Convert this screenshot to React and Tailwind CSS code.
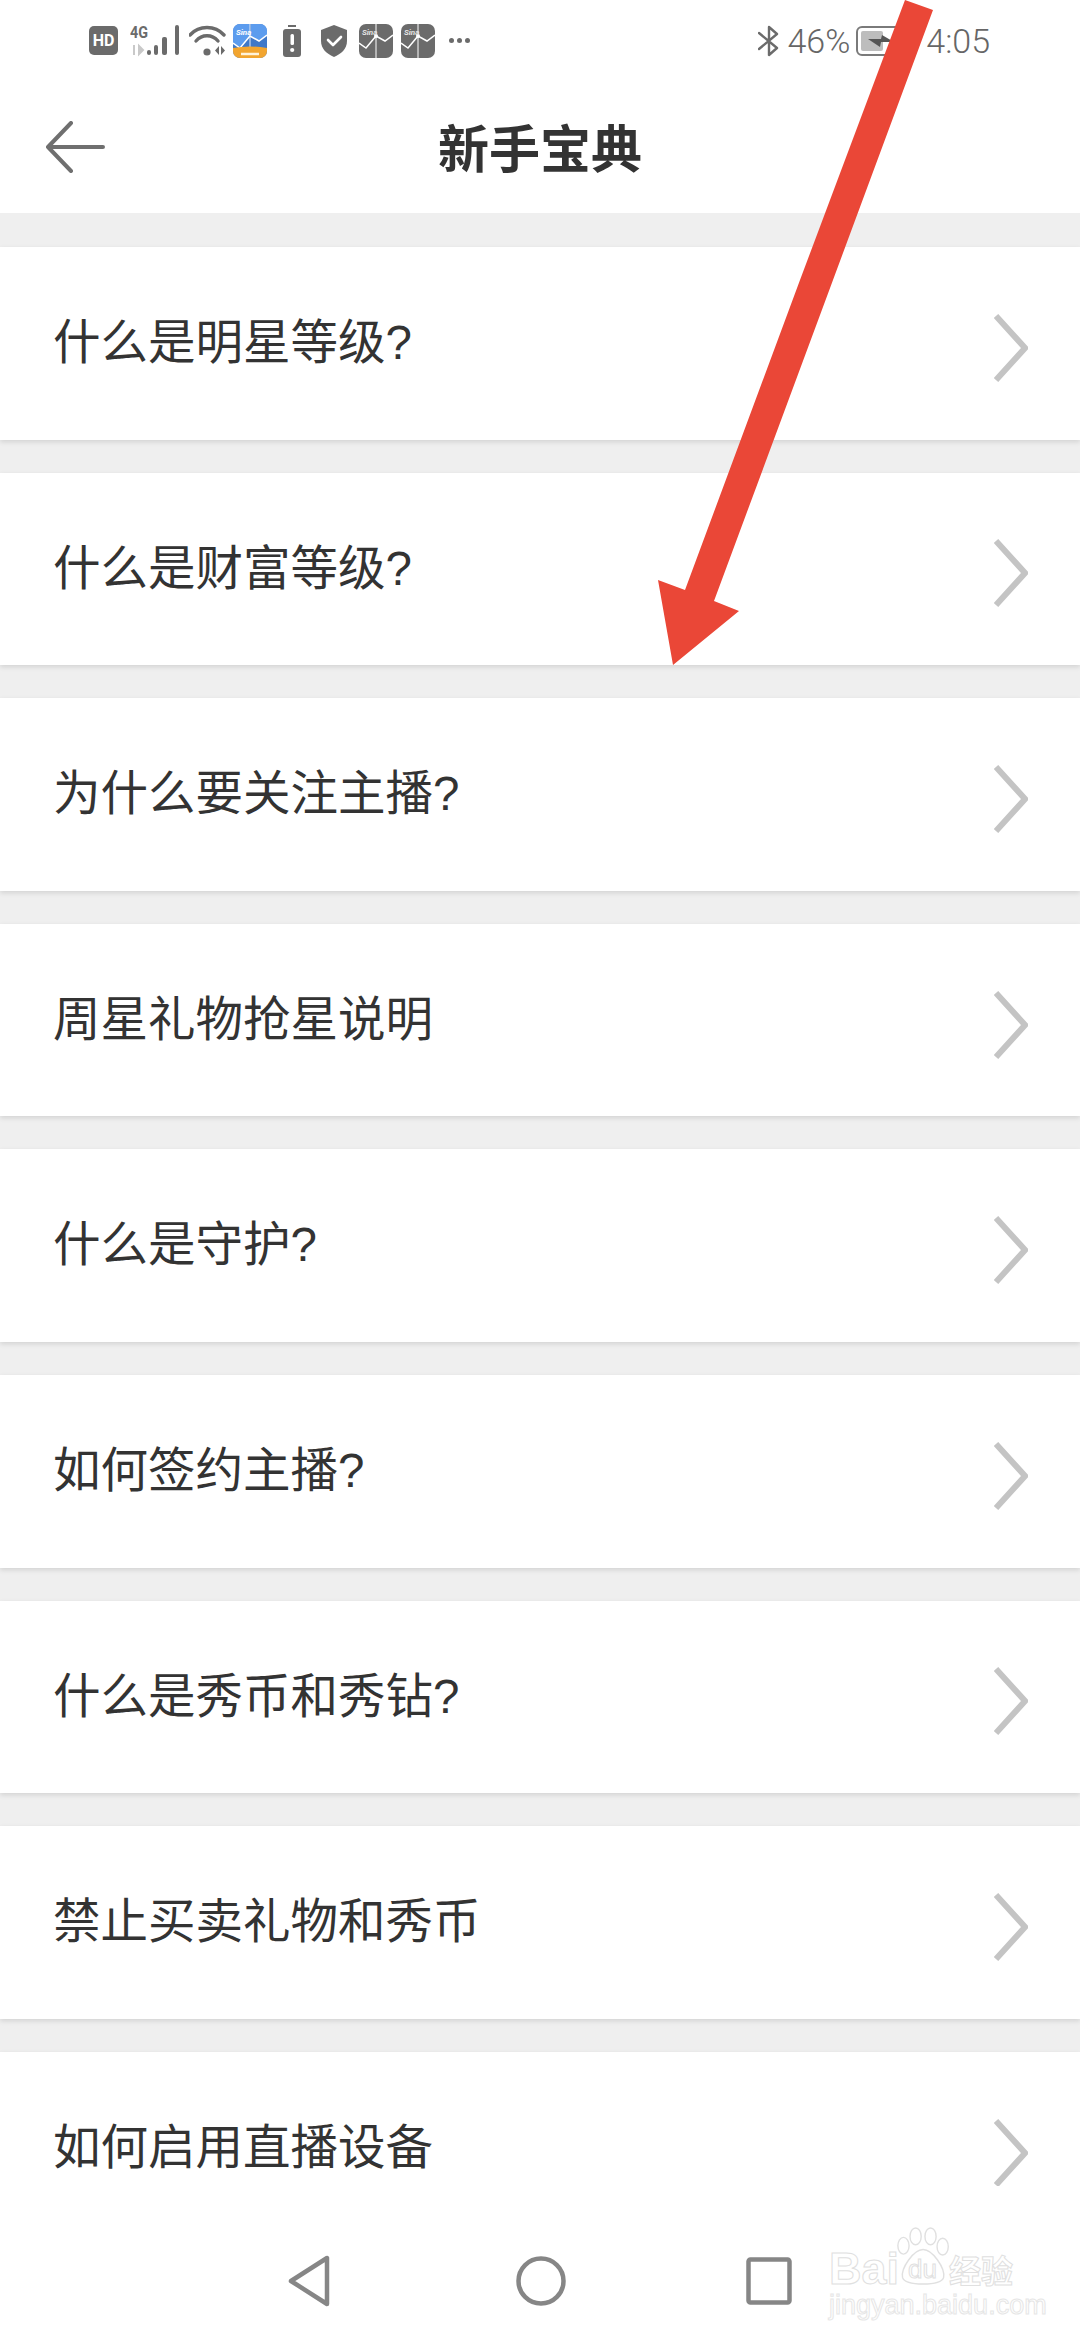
const rows = [
  '什么是明星等级?',
  '什么是财富等级?',
  '为什么要关注主播?',
  '周星礼物抢星说明',
  '什么是守护?',
  '如何签约主播?',
  '什么是秀币和秀钻?',
  '禁止买卖礼物和秀币',
  '如何启用直播设备',
]

const GreyApp = ({ className }) => (
  <svg width="34" height="34" viewBox="0 0 34 34" className={className}>
    <rect width="34" height="34" rx="7" fill="#6b6b6b" />
    <path d="M17 0v34" stroke="#fff" strokeWidth="1" />
    <path d="M0 19l7 5 10-12 9 5 8-6" fill="none" stroke="#fff" strokeWidth="1.500" />
    <circle cx="17" cy="12" r="2" fill="#fff" />
    <text x="3" y="11" fontSize="8" fontStyle="italic" fontWeight="700" fill="#e4e4e4" fontFamily="Roboto, sans-serif">Sina</text>
  </svg>
)

const StatusBar = () => (
  <div className="flex h-[70px] items-center pl-[89px] pr-[90px] pt-[11px] text-[#666666]">
    <div className="flex h-[29px] w-[29px] items-center justify-center rounded-[5px] bg-[#6b6b6b] font-['Roboto',sans-serif] text-[16px] font-bold leading-none text-white">HD</div>
    <svg width="50" height="32" viewBox="0 0 50 32" className="ml-[12px]">
      <text x="0" y="13" fontSize="16" fontWeight="700" fill="#6b6b6b" fontFamily="Roboto, sans-serif" textLength="18" lengthAdjust="spacingAndGlyphs">4G</text>
      <path d="M4 20v10M9 21l4 4-4 4z" stroke="#c9c9c9" strokeWidth="2" fill="#c9c9c9" />
      <rect x="17" y="25" width="4" height="5" rx="2" fill="#6b6b6b" />
      <rect x="24" y="20" width="4" height="10" rx="2" fill="#6b6b6b" />
      <rect x="32" y="12" width="5" height="18" rx="2" fill="#6b6b6b" />
      <rect x="45" y="0" width="4" height="30" rx="2" fill="#6b6b6b" />
    </svg>
    <svg width="37" height="32" viewBox="0 0 37 32" className="ml-[9px]">
      <path d="M1 10C10 0 26 0 35 10" fill="none" stroke="#6b6b6b" strokeWidth="3.400" strokeLinecap="round" />
      <path d="M7 16C13 9 23 9 29 16" fill="none" stroke="#6b6b6b" strokeWidth="3.400" strokeLinecap="round" />
      <circle cx="18" cy="27" r="3.600" fill="#6b6b6b" />
      <path d="M30 21v9l-4-4.500zM32 21v9l4-4.500z" fill="#6b6b6b" />
    </svg>
    <svg width="34" height="34" viewBox="0 0 34 34" className="ml-[7px]">
      <rect width="34" height="34" rx="7" fill="#3f78c8" />
      <path d="M0 7a7 7 0 0 1 7-7h10v12L7 24 0 19zM18 0h9a7 7 0 0 1 7 7v4l-8 6-8-5z" fill="#5c9cee" />
      <path d="M17 0v24" stroke="#dfe9f7" strokeWidth="1" />
      <path d="M0 19l7 5 10-12 9 5 8-6" fill="none" stroke="#fff" strokeWidth="1.500" />
      <path d="M0 24q17-3 34 0v3a7 7 0 0 1-7 7H7a7 7 0 0 1-7-7z" fill="#f2a52f" />
      <text x="3" y="11" fontSize="8" fontStyle="italic" fontWeight="700" fill="#fff" fontFamily="Roboto, sans-serif">Sina</text>
      <path d="M8 30h18" stroke="#fff3da" strokeWidth="2.500" />
    </svg>
    <svg width="18" height="32" viewBox="0 0 18 32" className="ml-[16px]">
      <rect x="5" y="0" width="8" height="2" fill="#6b6b6b" />
      <rect x="0" y="4" width="18" height="28" rx="3" fill="#6b6b6b" />
      <rect x="7.500" y="9" width="3.500" height="11" rx="1.500" fill="#fff" />
      <circle cx="9.200" cy="25" r="2.100" fill="#fff" />
    </svg>
    <svg width="26" height="32" viewBox="0 0 26 32" className="ml-[20px]">
      <path d="M13 0l13 5v11c0 8-6 13-13 16C6 29 0 24 0 16V5z" fill="#6b6b6b" />
      <path d="M7 15l5 5 8-8" fill="none" stroke="#fff" strokeWidth="2.600" strokeLinecap="round" strokeLinejoin="round" />
    </svg>
    <GreyApp className="ml-[12px]" />
    <GreyApp className="ml-[8px]" />
    <div className="ml-[14px] flex w-[22px] gap-[3px]">
      <span className="h-[5px] w-[5px] rounded-full bg-[#6b6b6b]" />
      <span className="h-[5px] w-[5px] rounded-full bg-[#6b6b6b]" />
      <span className="h-[5px] w-[5px] rounded-full bg-[#6b6b6b]" />
    </div>
    <div className="flex-1" />
    <svg width="21" height="32" viewBox="0 0 21 32">
      <path d="M1 8l18 15-8 7V2l8 7L1 24" fill="none" stroke="#6b6b6b" strokeWidth="2.400" strokeLinejoin="round" strokeLinecap="round" />
    </svg>
    <span className="ml-[8px] font-['Roboto',sans-serif] text-[34px] font-light leading-none">46%</span>
    <svg width="52" height="30" viewBox="0 0 52 30" className="ml-[6px]">
      <rect x="1" y="1" width="50" height="28" rx="5" fill="none" stroke="#7a7a7a" strokeWidth="2" />
      <rect x="5" y="5" width="22" height="20" rx="2" fill="#bdbdbd" />
      <path d="M12 13h13l1-4 12 7H25l-1 5z" fill="#555555" />
    </svg>
    <span className="ml-[18px] font-['Roboto',sans-serif] text-[34px] font-light leading-none">4:05</span>
  </div>
)

const Header = () => (
  <div className="flex h-[143px] items-center pt-[10px]">
    <svg width="60" height="52" viewBox="0 0 60 52" className="ml-[45px]">
      <path d="M58 26H3M26 2L3 26l23 24" fill="none" stroke="#6f6f6f" strokeWidth="4" strokeLinecap="round" strokeLinejoin="round" />
    </svg>
    <h1 className="flex-1 text-center text-[51px] font-bold leading-none text-[#333333]">新手宝典</h1>
    <div className="w-[105px]" />
  </div>
)

const Row = ({ label }) => (
  <div className="flex h-[192.6px] shrink-0 items-center justify-between bg-white pl-[53px] pr-[52px] shadow-[0_2px_5px_rgba(0,0,0,0.12)]">
    <span className="mb-[1px] font-['Liberation_Sans','Noto_Sans_CJK_SC',sans-serif] text-[47.5px] leading-none text-[#333333]">{label}</span>
    <svg width="34" height="68" viewBox="0 0 34 68" className="mt-[9px]">
      <path d="M2 2l29 32L2 66" fill="none" stroke="#c4c4c4" strokeWidth="6" />
    </svg>
  </div>
)

const NavBar = () => (
  <div className="relative flex h-[154px] shrink-0 items-start bg-white pl-[288px] pt-[69px]">
    <svg width="42" height="52" viewBox="0 0 42 52">
      <path d="M39 3v46L3 26z" fill="none" stroke="#868686" strokeWidth="4.500" strokeLinejoin="round" />
    </svg>
    <svg width="50" height="52" viewBox="0 0 50 52" className="ml-[186px]">
      <circle cx="25" cy="26" r="22.500" fill="none" stroke="#868686" strokeWidth="4.500" />
    </svg>
    <svg width="46" height="48" viewBox="0 0 46 48" className="ml-[180px] mt-[2px]">
      <rect x="2.500" y="2.500" width="41" height="43" rx="2" fill="none" stroke="#868686" strokeWidth="4.500" />
    </svg>
    {/* watermark */}
    <div className="absolute left-[829px] top-[39px] w-[195px] text-white">
      <div className="flex items-end">
        <span className="font-['Liberation_Sans',sans-serif] text-[45px] font-bold leading-[36px] [-webkit-text-stroke:1px_#e0e0e0]">Bai</span>
        <svg width="56" height="62" viewBox="0 0 60 62" className="-ml-[3px]">
          <g fill="#fff" stroke="#e0e0e0" strokeWidth="1.500">
            <ellipse cx="8" cy="20" rx="6" ry="9" />
            <ellipse cx="21" cy="10" rx="6" ry="9" />
            <ellipse cx="37" cy="10" rx="6" ry="9" />
            <ellipse cx="50" cy="21" rx="6" ry="9" />
            <path d="M29 24c10 0 24 20 22 30-2 6-12 7-22 7S9 60 7 54c-2-10 12-30 22-30z" />
          </g>
        </svg>
        <span className="-ml-[44px] mb-[5px] w-[36px] font-['Liberation_Sans',sans-serif] text-[26px] leading-none [-webkit-text-stroke:1px_#e0e0e0]">du</span>
        <span className="ml-[5px] whitespace-nowrap text-[32px] font-bold leading-[36px] [-webkit-text-stroke:1px_#e0e0e0]">经验</span>
      </div>
      <div className="mt-[5px] whitespace-nowrap font-['Liberation_Sans',sans-serif] text-[27px] leading-[26px] [-webkit-text-stroke:1px_#e6e6e6]">jingyan.baidu.com</div>
    </div>
  </div>
)

export default function App() {
  return (
    <div className="relative flex h-[2340px] w-[1080px] flex-col overflow-hidden bg-white font-['Noto_Sans_CJK_SC',sans-serif]">
      <StatusBar />
      <Header />
      <div className="flex min-h-0 flex-1 flex-col gap-[33px] overflow-hidden bg-[#efefef] pt-[34px]">
        {rows.map((label) => (
          <Row key={label} label={label} />
        ))}
      </div>
      <NavBar />
      {/* red annotation arrow */}
      <svg width="1080" height="700" viewBox="0 0 1080 700" className="absolute left-0 top-0">
        <path d="M905 0L933 10 833 280 714 601 739 611 673 665 658 580 685 590 800 280z" fill="#ea4737" />
      </svg>
    </div>
  )
}
